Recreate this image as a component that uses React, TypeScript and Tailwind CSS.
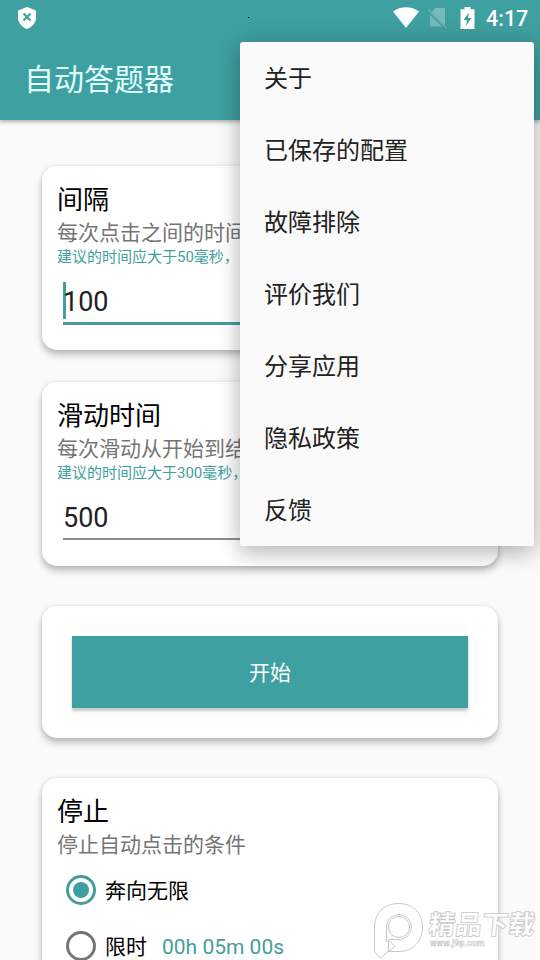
import type { ReactNode } from "react";

const menuItems = ["关于", "已保存的配置", "故障排除", "评价我们", "分享应用", "隐私政策", "反馈"];

function StatusBar() {
  return (
    <div className="relative flex h-9 items-center justify-between pl-[17px] pr-[12px]">
      <svg width="20" height="23" viewBox="0 0 20 23">
        <path d="M10 0 19 3.500v7c0 5-3.500 9.500-9 11.500C4.500 20 1 15.500 1 10.500v-7z" fill="#fff" />
        <path d="m6.500 6.500 7 7m0-7-7 7" stroke="#3fa0a1" strokeWidth="2.200" />
      </svg>
      <div className="flex items-center">
        <svg width="26" height="22" viewBox="0 0 26 22">
          <path d="M0 4.500C7.500-1.200 18.500-1.200 26 4.500L13 21z" fill="#fff" />
        </svg>
        <svg className="ml-[9px]" width="20" height="22" viewBox="0 0 20 22">
          <path d="M7.500 1h9.500v18.500H2V7z" fill="#74bbbb" />
          <path d="m0 4.500 17 17" stroke="#3fa0a1" strokeWidth="1.600" />
          <path d="m.5 2.500 18 18.500" stroke="#78a9a9" strokeWidth="1.600" />
        </svg>
        <svg className="ml-[12px]" width="15" height="22" viewBox="0 0 15 22">
          <path d="M4.500 0h6v2.200H14.500V22H.5V2.200h4z" fill="#fff" />
          <path d="M8.800 5.500 3.500 13H7l-1 6 5.300-8H8z" fill="#3fa0a1" />
        </svg>
        <span className="ml-[11px] w-[42px] whitespace-nowrap pt-0.5 text-[21.5px] leading-9 font-medium text-white">4:17</span>
      </div>
      <i className="absolute left-[248px] top-[17px] h-px w-px bg-black" />
    </div>
  );
}

function Card({ className, children }: { className: string; children: ReactNode }) {
  return (
    <section className={`rounded-[15px] bg-white shadow-[0_5px_7px_rgba(0,0,0,0.23),0_0_5px_rgba(0,0,0,0.11)] ${className}`}>
      {children}
    </section>
  );
}

function Heading({ title, detail }: { title: string; detail: string }) {
  return (
    <>
      <h2 className="h-[38px] text-[26px] leading-[38px] text-black">{title}</h2>
      <p className="h-[27px] text-[21px] leading-[29px] text-[#757575]">{detail}</p>
    </>
  );
}

function Radio({ checked }: { checked?: boolean }) {
  return (
    <span className={`flex size-[30px] shrink-0 items-center justify-center rounded-full border-3 ${checked ? "border-[#479d9c]" : "border-[#757575]"}`}>
      {checked && <span className="size-4 rounded-full bg-[#3fa0a1]" />}
    </span>
  );
}

function Watermark() {
  return (
    <div className="absolute left-[373px] top-[901px] flex h-[59px] w-[164px]">
      <svg className="shrink-0" width="54" height="59" viewBox="0 0 54 59" fill="#fff" stroke="#c8c8c8" strokeWidth="1">
        <path d="M1.500 50V27C1.500 12 11 2.500 25.500 2.500S49.500 12 49.500 26 40 50.500 26 50.500H15.500l6.500-5.500-6.500-5.500V50l-8 7z" stroke="none" />
        <path d="M7.500 57 1.500 51V27C1.500 12 11 2.500 25.500 2.500S49.500 12 49.500 26 40 50.500 26 50.500H15.500l6.500-5-6.500-6.500V50L7.500 57" fill="none" />
        <path d="M13.500 41V26a12.500 12.500 0 1 1 12.500 12.500H15.500" fill="none" />
        <circle cx="26" cy="26" r="10.500" />
      </svg>
      <div className="ml-0.5 pt-[7px]">
        <div className="-skew-x-6 whitespace-nowrap text-[26.500px] leading-[34px] font-black text-white [-webkit-text-stroke:0.8px_#c8c8c8]">精品下载</div>
        <div className="-mt-[6px] ml-[1px] text-[9px] leading-[14px] font-bold text-white [-webkit-text-stroke:0.5px_#c4c4c4]">www.j9p.com</div>
      </div>
    </div>
  );
}

export default function App() {
  return (
    <div className="relative flex h-[960px] w-[540px] flex-col overflow-hidden bg-[#fafafa] font-['Roboto','Noto_Sans_CJK_SC',sans-serif]">
      <header className="h-[120px] shrink-0 bg-[#3fa0a1] shadow-[0_2px_4px_rgba(0,0,0,0.3)]">
        <StatusBar />
        <h1 className="pl-6 pt-[22px] text-[30px] leading-[44px] font-normal text-[#e0ffff]">自动答题器</h1>
      </header>

      <main className="flex flex-col px-[42px] pt-[46px]">
        <Card className="h-[184px] px-[15px] pt-[15px]">
          <Heading title="间隔" detail="每次点击之间的时间" />
          <p className="text-[15px] leading-[22px] text-[#3fa0a1]">建议的时间应大于50毫秒，以</p>
          <div className="ml-[6px] mt-[14px] h-[43px] border-b-3 border-[#479d9c]">
            <div className="h-[37px] border-l-3 border-[#479d9c]">
              <span className="-ml-[3px] block text-[27px] leading-[41px] text-[#212121]">100</span>
            </div>
          </div>
        </Card>
        <Card className="mt-8 h-[184px] px-[15px] pt-[15px]">
          <Heading title="滑动时间" detail="每次滑动从开始到结束" />
          <p className="text-[15px] leading-[22px] text-[#3fa0a1]">建议的时间应大于300毫秒，</p>
          <div className="ml-[6px] mt-[14px] h-[42px] border-b-2 border-[#8c8c8c] text-[27px] leading-[41px] text-[#212121]">500</div>
        </Card>
        <Card className="mt-10 h-[132px] p-[30px]">
          <button className="h-[72px] w-full bg-[#3fa0a1] pt-[3px] text-[21px] text-white shadow-[0_3px_3px_rgba(0,0,0,0.22)]">开始</button>
        </Card>
        <Card className="mt-10 h-[240px] px-[15px] pt-[15px]">
          <Heading title="停止" detail="停止自动点击的条件" />
          <div className="ml-[9px] mt-[17px] flex h-[30px] items-center gap-[9px] text-[21px] text-black">
            <Radio checked />
            <span className="pt-1">奔向无限</span>
          </div>
          <div className="ml-[9px] mt-[26px] flex h-[30px] items-center gap-[9px] text-[21px] text-black">
            <Radio />
            <span className="pt-[3px]">限时</span>
            <span className="ml-[6px] pt-[3px] text-[#479d9c]">00h 05m 00s</span>
          </div>
        </Card>
      </main>

      <nav className="absolute left-[240px] top-[42px] w-[294px] rounded-[3px] bg-[#fafafa] shadow-[0_10px_20px_rgba(0,0,0,0.16),0_0_24px_rgba(0,0,0,0.18)]">
        {menuItems.map((item) => (
          <div key={item} className="flex h-[72px] items-center pl-6 pt-0.5 text-2xl text-[#212121]">{item}</div>
        ))}
      </nav>
      <Watermark />
    </div>
  );
}
